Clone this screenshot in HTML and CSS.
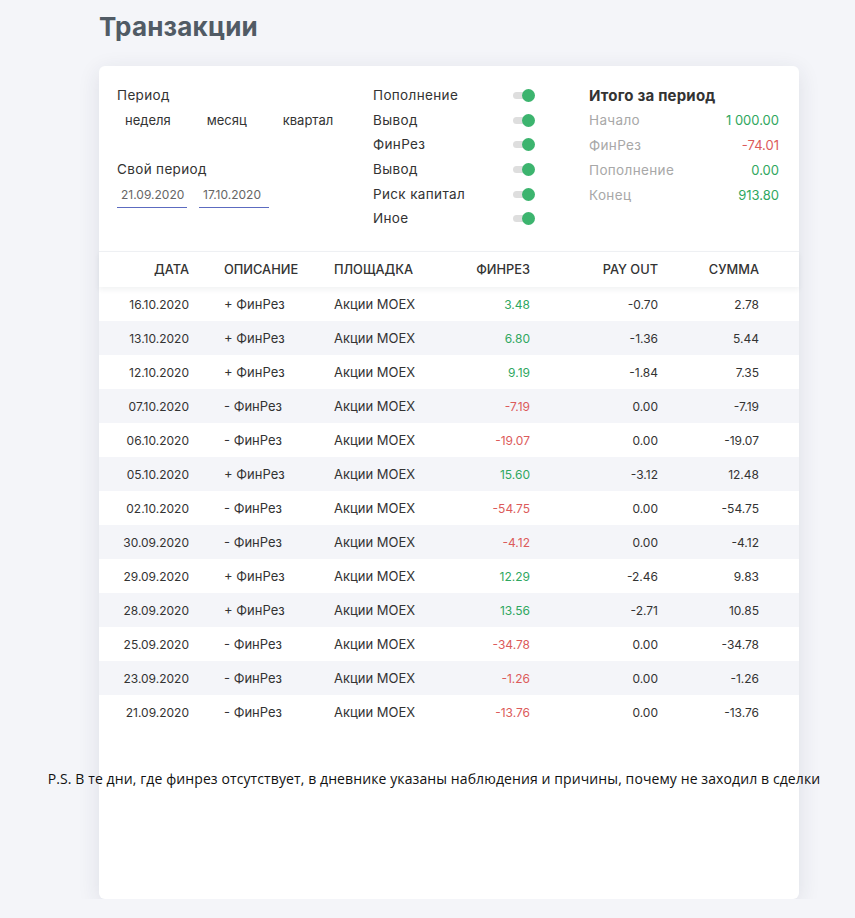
FILE: index.html
```html
<!DOCTYPE html>
<html lang="ru">
<head>
<meta charset="utf-8">
<title>Транзакции</title>
<link rel="stylesheet" href="styles.css">
</head>
<body>
<div class="page">
  <h1 class="title">Транзакции</h1>
  <div class="card">
    <div class="filters">
      <div class="col-period">
        <div class="label">Период</div>
        <div class="period-opts">
          <span class="opt">неделя</span>
          <span class="opt">месяц</span>
          <span class="opt">квартал</span>
        </div>
        <div class="label label-own">Свой период</div>
        <div class="dates">
          <span class="date-input">21.09.2020</span>
          <span class="date-input">17.10.2020</span>
        </div>
      </div>
      <div class="col-toggles">
        <div class="toggle-row"><span>Пополнение</span><span class="toggle"><span class="knob"></span></span></div>
        <div class="toggle-row"><span>Вывод</span><span class="toggle"><span class="knob"></span></span></div>
        <div class="toggle-row"><span>ФинРез</span><span class="toggle"><span class="knob"></span></span></div>
        <div class="toggle-row"><span>Вывод</span><span class="toggle"><span class="knob"></span></span></div>
        <div class="toggle-row"><span>Риск капитал</span><span class="toggle"><span class="knob"></span></span></div>
        <div class="toggle-row"><span>Иное</span><span class="toggle"><span class="knob"></span></span></div>
      </div>
      <div class="col-total">
        <div class="total-title">Итого за период</div>
        <div class="total-row"><span class="tl">Начало</span><span class="val pos">1 000.00</span></div>
        <div class="total-row"><span class="tl">ФинРез</span><span class="val neg">-74.01</span></div>
        <div class="total-row"><span class="tl">Пополнение</span><span class="val pos">0.00</span></div>
        <div class="total-row"><span class="tl">Конец</span><span class="val pos">913.80</span></div>
      </div>
    </div>

    <div class="table">
      <div class="thead row">
        <span class="c-date">Дата</span>
        <span class="c-desc">Описание</span>
        <span class="c-place">Площадка</span>
        <span class="c-num">ФинРез</span>
        <span class="c-pay">Pay out</span>
        <span class="c-sum">Сумма</span>
      </div>
      <div class="row"><span class="c-date">16.10.2020</span><span class="c-desc">+ ФинРез</span><span class="c-place">Акции MOEX</span><span class="c-num pos">3.48</span><span class="c-pay">-0.70</span><span class="c-sum">2.78</span></div>
      <div class="row"><span class="c-date">13.10.2020</span><span class="c-desc">+ ФинРез</span><span class="c-place">Акции MOEX</span><span class="c-num pos">6.80</span><span class="c-pay">-1.36</span><span class="c-sum">5.44</span></div>
      <div class="row"><span class="c-date">12.10.2020</span><span class="c-desc">+ ФинРез</span><span class="c-place">Акции MOEX</span><span class="c-num pos">9.19</span><span class="c-pay">-1.84</span><span class="c-sum">7.35</span></div>
      <div class="row"><span class="c-date">07.10.2020</span><span class="c-desc">- ФинРез</span><span class="c-place">Акции MOEX</span><span class="c-num neg">-7.19</span><span class="c-pay">0.00</span><span class="c-sum">-7.19</span></div>
      <div class="row"><span class="c-date">06.10.2020</span><span class="c-desc">- ФинРез</span><span class="c-place">Акции MOEX</span><span class="c-num neg">-19.07</span><span class="c-pay">0.00</span><span class="c-sum">-19.07</span></div>
      <div class="row"><span class="c-date">05.10.2020</span><span class="c-desc">+ ФинРез</span><span class="c-place">Акции MOEX</span><span class="c-num pos">15.60</span><span class="c-pay">-3.12</span><span class="c-sum">12.48</span></div>
      <div class="row"><span class="c-date">02.10.2020</span><span class="c-desc">- ФинРез</span><span class="c-place">Акции MOEX</span><span class="c-num neg">-54.75</span><span class="c-pay">0.00</span><span class="c-sum">-54.75</span></div>
      <div class="row"><span class="c-date">30.09.2020</span><span class="c-desc">- ФинРез</span><span class="c-place">Акции MOEX</span><span class="c-num neg">-4.12</span><span class="c-pay">0.00</span><span class="c-sum">-4.12</span></div>
      <div class="row"><span class="c-date">29.09.2020</span><span class="c-desc">+ ФинРез</span><span class="c-place">Акции MOEX</span><span class="c-num pos">12.29</span><span class="c-pay">-2.46</span><span class="c-sum">9.83</span></div>
      <div class="row"><span class="c-date">28.09.2020</span><span class="c-desc">+ ФинРез</span><span class="c-place">Акции MOEX</span><span class="c-num pos">13.56</span><span class="c-pay">-2.71</span><span class="c-sum">10.85</span></div>
      <div class="row"><span class="c-date">25.09.2020</span><span class="c-desc">- ФинРез</span><span class="c-place">Акции MOEX</span><span class="c-num neg">-34.78</span><span class="c-pay">0.00</span><span class="c-sum">-34.78</span></div>
      <div class="row"><span class="c-date">23.09.2020</span><span class="c-desc">- ФинРез</span><span class="c-place">Акции MOEX</span><span class="c-num neg">-1.26</span><span class="c-pay">0.00</span><span class="c-sum">-1.26</span></div>
      <div class="row"><span class="c-date">21.09.2020</span><span class="c-desc">- ФинРез</span><span class="c-place">Акции MOEX</span><span class="c-num neg">-13.76</span><span class="c-pay">0.00</span><span class="c-sum">-13.76</span></div>
    </div>

    <div class="ps-wrap">
      <p class="ps">P.S. В те дни, где финрез отсутствует, в дневнике указаны наблюдения и причины, почему не заходил в сделки</p>
    </div>
  </div>
</div>
</body>
</html>
```

FILE: styles.css
```css
* { box-sizing: border-box; }

body {
  margin: 0;
  background: #f4f5f9;
  font-family: Inter, "DejaVu Sans", sans-serif;
  color: #333;
}

.page {
  padding-left: 99px;
  width: 799px;
}

.title {
  margin: 0;
  padding-top: 11px;
  height: 66px;
  font-size: 26px;
  line-height: 32px;
  font-weight: 700;
  letter-spacing: 0.2px;
  color: #515b65;
}

.card {
  background: #fff;
  border-radius: 6px;
  box-shadow: 0 5px 22px rgba(40, 45, 70, 0.11);
  height: 833px;
}

.filters {
  display: grid;
  grid-template-columns: 256px 216px 190px;
  padding: 17px 20px 0 18px;
  height: 185px;
  font-size: 13.5px;
  letter-spacing: 0.35px;
  line-height: 25px;
}

.label { color: #333; }
.label-own { margin-top: 25px; }

.period-opts {
  display: flex;
  gap: 20px;
  line-height: 24px;
}
.opt { padding: 0 8px; color: #333; font-size: 13px; letter-spacing: 0; }

.dates {
  display: flex;
  gap: 12px;
}
.date-input {
  width: 70px;
  padding-left: 4px;
  font-size: 12px;
  letter-spacing: 0;
  color: #666;
  border-bottom: 1px solid #5c6bc0;
  line-height: 25px;
}

.toggle-row {
  display: flex;
  align-items: center;
  justify-content: space-between;
  width: 160px;
  height: 24.7px;
}

.toggle {
  position: relative;
  width: 20px;
  height: 7px;
  border-radius: 4px;
  background: #dedede;
}
.knob {
  position: absolute;
  right: -2px;
  top: -3px;
  width: 13px;
  height: 13px;
  border-radius: 50%;
  background: #3cb46e;
}

.total-title {
  font-weight: 700;
  font-size: 15px;
  letter-spacing: 0.2px;
  color: #333;
}
.total-row {
  display: flex;
  justify-content: space-between;
}
.tl { color: #a8a8a8; }
.val { font-size: 13px; letter-spacing: 0; }

.pos { color: #2fa760; }
.neg { color: #dc5b5b; }

.table {
  font-size: 12px;
}
.row {
  display: grid;
  grid-template-columns: 90px 145px 106px 90px 128px 101px;
  height: 34px;
  align-items: center;
  color: #333;
}
.row:nth-child(odd):not(.thead) { background: #f4f5f9; }

.c-desc, .c-place { font-size: 13px; }

.thead {
  height: 36px;
  border-top: 1px solid #eef0f3;
  text-transform: uppercase;
  font-weight: 500;
  font-size: 12.8px;
  position: relative;
  box-shadow: 0 3px 5px rgba(40, 45, 70, 0.06);
}
.thead .c-desc, .thead .c-place { font-size: 12.8px; }

.c-date { text-align: right; }
.c-desc { padding-left: 35px; }
.c-num, .c-pay, .c-sum { text-align: right; }

.ps-wrap {
  display: flex;
  justify-content: center;
  margin-right: 30px;
  margin-top: 39px;
}
.ps {
  margin: 0;
  white-space: nowrap;
  font-family: "Open Sans", "Noto Sans", sans-serif;
  font-size: 14px;
  letter-spacing: 0.1px;
  line-height: 22px;
  color: #111;
}
```
